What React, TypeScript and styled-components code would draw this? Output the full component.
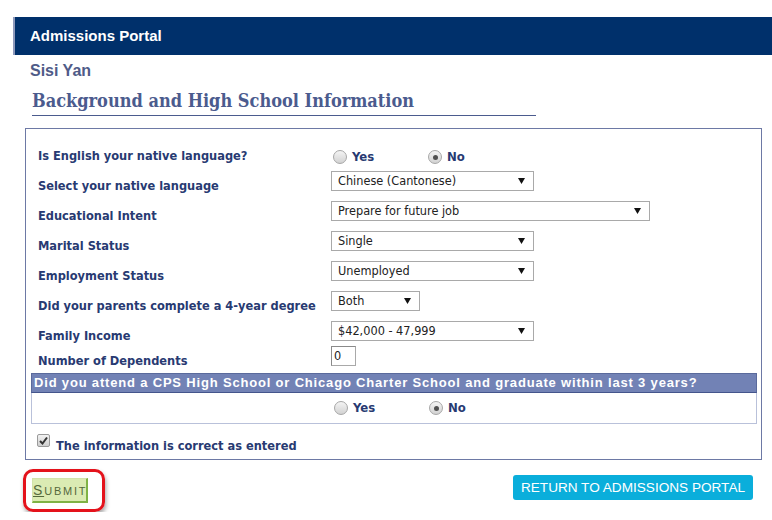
import React from "react";
import styled, { createGlobalStyle } from "styled-components";

const Global = createGlobalStyle`
  html, body { margin: 0; padding: 0; background: #fff; }
  body { font-family: "Liberation Sans", Arial, sans-serif; }
`;

const Page = styled.div`
  padding-top: 17px;
  padding-left: 13px;
  width: 759px;
`;

const TopBar = styled.div`
  height: 38px;
  background: #00306b;
  border-left: 2px solid #8e99bb;
  padding-left: 15px;
  color: #fff;
  font: bold 15px/38px "Liberation Sans", Arial, sans-serif;
`;

const UserName = styled.div`
  margin: 7px 0 0 17px;
  color: #4f5b88;
  font: bold 16px/18px "Liberation Sans", Arial, sans-serif;
`;

const Heading = styled.h1`
  margin: 10px 0 0 19px;
  width: 504px;
  padding-bottom: 3px;
  border-bottom: 1px solid #4b5b8e;
  color: #4b5b8e;
  font: bold 18px/22px "DejaVu Serif Condensed", "DejaVu Serif", Georgia, serif;
`;

const Panel = styled.div`
  margin: 12px 0 0 12px;
  width: 735px;
  border: 1px solid #6d79a5;
  padding: 12px 0 5px 0;
`;

const Row = styled.div<{ $h?: number }>`
  display: grid;
  grid-template-columns: 293px 1fr;
  height: ${(p) => p.$h ?? 30}px;
  padding-left: 12px;
`;

const labelFont = `bold 12.7px/16px "DejaVu Sans Condensed", "DejaVu Sans", Tahoma, sans-serif`;

const Label = styled.div`
  align-self: start;
  padding-top: 7px;
  color: #283a72;
  font: ${labelFont};
  font-stretch: condensed;
`;

const Control = styled.div<{ $top?: number }>`
  align-self: start;
  padding-top: ${(p) => p.$top ?? 0}px;
`;

const RadioGroup = styled.div<{ $left?: number }>`
  display: flex;
  align-items: center;
  padding-left: ${(p) => p.$left ?? 2}px;
`;

const RadioOption = styled.label`
  display: flex;
  align-items: center;
  width: 95px;
  color: #283a72;
  font: bold 13px/16px "DejaVu Sans Condensed", "DejaVu Sans", Tahoma, sans-serif;
  font-stretch: condensed;
`;

const RadioDot = styled.span<{ $checked?: boolean }>`
  position: relative;
  width: 14px;
  height: 14px;
  border-radius: 50%;
  border: 1px solid #a7a7a7;
  background: linear-gradient(#f4f4f4, #d2d2d2);
  margin-right: 5px;
  box-sizing: border-box;
  &::after {
    content: "";
    display: ${(p) => (p.$checked ? "block" : "none")};
    position: absolute;
    left: 3.5px;
    top: 3.5px;
    width: 5px;
    height: 5px;
    border-radius: 50%;
    background: #505050;
  }
`;

const SelectBox = styled.div<{ $w: number }>`
  display: flex;
  align-items: center;
  justify-content: space-between;
  box-sizing: border-box;
  width: ${(p) => p.$w}px;
  height: 20px;
  border: 1px solid #a9a9a9;
  background: #fff;
  padding: 0 8px 0 6px;
  color: #222;
  font: 12.6px/18px "DejaVu Sans Condensed", "DejaVu Sans", Tahoma, sans-serif;
  font-stretch: condensed;
`;

const TextBox = styled.div`
  box-sizing: border-box;
  width: 25px;
  height: 20px;
  border: 1px solid #a9a9a9;
  border-top-color: #8a8a8a;
  border-left-color: #8a8a8a;
  padding-left: 2px;
  color: #222;
  font: 12.6px/18px "DejaVu Sans Condensed", "DejaVu Sans", Tahoma, sans-serif;
  font-stretch: condensed;
`;

const Band = styled.div`
  margin: 0 4px 0 5px;
  height: 18px;
  background: #7282b5;
  border: 1px solid #5a6a9c;
  border-bottom-color: #44558c;
  padding-left: 2px;
  color: #fff;
  font: bold 13px/18px "Liberation Sans", Arial, sans-serif;
  letter-spacing: 0.82px;
  white-space: nowrap;
`;

const BandBody = styled.div`
  margin: 0 4px 0 5px;
  height: 30px;
  border: 1px solid #b9c1da;
  border-top: none;
  display: flex;
  align-items: center;
`;

const ConfirmRow = styled.div`
  display: flex;
  align-items: flex-start;
  margin: 10px 0 0 11px;
  color: #283a72;
  font: ${labelFont};
  font-stretch: condensed;
`;

const CheckBox = styled.span`
  display: flex;
  align-items: center;
  justify-content: center;
  box-sizing: border-box;
  width: 13px;
  height: 13px;
  margin-right: 6px;
  border: 1px solid #9a9a9a;
  border-radius: 2px;
  background: linear-gradient(#f2f2f2, #cfcfcf);
`;

const ConfirmText = styled.span`
  padding-top: 4px;
`;

const BottomRow = styled.div`
  display: flex;
  justify-content: space-between;
  align-items: flex-start;
  margin: 9px 19px 0 10px;
`;

const Highlight = styled.div`
  border: 3px solid #e4121b;
  border-radius: 10px;
  padding: 6px 14px 6px 6px;
  box-shadow: 1px 3px 4px rgba(0, 0, 0, 0.35);
`;

const SubmitButton = styled.button`
  box-sizing: border-box;
  width: 56px;
  height: 25px;
  padding: 0;
  background: #dbebb3;
  border: 1px solid #d3e3aa;
  border-right: 2px solid #7fb345;
  border-bottom: 2px solid #7fb345;
  color: #55683b;
  font: 11px/22px "Liberation Sans", Arial, sans-serif;
  letter-spacing: 1.8px;
  text-align: center;
  cursor: pointer;
`;

const BigCap = styled.span`
  font-size: 14px;
  text-decoration: underline;
`;

const ReturnButton = styled.button`
  margin-top: 6px;
  height: 25px;
  width: 240px;
  padding: 0;
  border: none;
  border-radius: 3px;
  background: #0aaedb;
  color: #fff;
  font: 13.6px/25px "Liberation Sans", Arial, sans-serif;
  cursor: pointer;
`;

const Arrow = () => (
  <svg width="7" height="6" viewBox="0 0 7 6">
    <polygon points="0,0 7,0 3.5,6" fill="#111" />
  </svg>
);

const Check = () => (
  <svg width="9" height="9" viewBox="0 0 9 9">
    <path d="M1 5 L3.5 7.5 L8 1.5" stroke="#333" strokeWidth="2" fill="none" />
  </svg>
);

const Select = ({ w, value }: { w: number; value: string }) => (
  <SelectBox $w={w}>
    <span>{value}</span>
    <Arrow />
  </SelectBox>
);

const YesNo = ({ left }: { left?: number }) => (
  <RadioGroup $left={left}>
    <RadioOption>
      <RadioDot />
      Yes
    </RadioOption>
    <RadioOption>
      <RadioDot $checked />
      No
    </RadioOption>
  </RadioGroup>
);

const rows: { label: string; w: number; value: string; h?: number }[] = [
  { label: "Select your native language", w: 203, value: "Chinese (Cantonese)" },
  { label: "Educational Intent", w: 319, value: "Prepare for future job" },
  { label: "Marital Status", w: 203, value: "Single" },
  { label: "Employment Status", w: 203, value: "Unemployed" },
  { label: "Did your parents complete a 4-year degree", w: 89, value: "Both" },
  { label: "Family Income", w: 203, value: "$42,000 - 47,999", h: 25 },
];

export default function App() {
  return (
    <>
      <Global />
      <Page>
        <TopBar>Admissions Portal</TopBar>
        <UserName>Sisi Yan</UserName>
        <Heading>Background and High School Information</Heading>
        <Panel>
          <Row>
            <Label>Is English your native language?</Label>
            <Control $top={8}>
              <YesNo />
            </Control>
          </Row>
          {rows.map((r) => (
            <Row key={r.label} $h={r.h}>
              <Label>{r.label}</Label>
              <Control>
                <Select w={r.w} value={r.value} />
              </Control>
            </Row>
          ))}
          <Row $h={27}>
            <Label>Number of Dependents</Label>
            <Control>
              <TextBox>0</TextBox>
            </Control>
          </Row>
          <Band>Did you attend a CPS High School or Chicago Charter School and graduate within last 3 years?</Band>
          <BandBody>
            <YesNo left={302} />
          </BandBody>
          <ConfirmRow>
            <CheckBox>
              <Check />
            </CheckBox>
            <ConfirmText>The information is correct as entered</ConfirmText>
          </ConfirmRow>
        </Panel>
        <BottomRow>
          <Highlight>
            <SubmitButton>
              <BigCap>S</BigCap>UBMIT
            </SubmitButton>
          </Highlight>
          <ReturnButton>RETURN TO ADMISSIONS PORTAL</ReturnButton>
        </BottomRow>
      </Page>
    </>
  );
}
